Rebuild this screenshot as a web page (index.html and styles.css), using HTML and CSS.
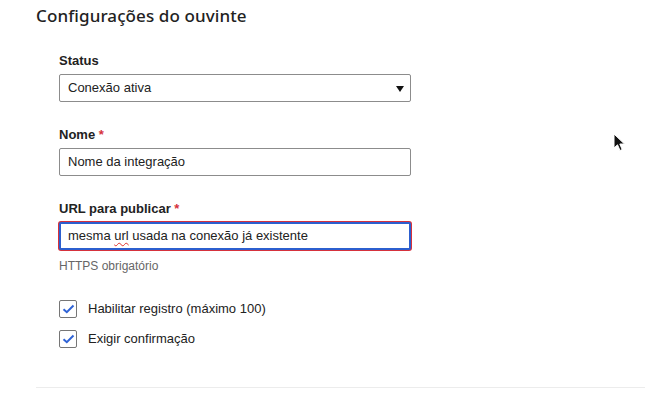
FILE: index.html
```html
<!DOCTYPE html>
<html lang="pt">
<head>
<meta charset="utf-8">
<link rel="stylesheet" href="styles.css">
</head>
<body>
<div class="page">
  <h2 class="title">Configurações do ouvinte</h2>
  <div class="form">
    <div class="field">
      <label class="label">Status</label>
      <div class="select">Conexão ativa<span class="caret"></span></div>
    </div>
    <div class="field">
      <label class="label">Nome <span class="req">*</span></label>
      <div class="input">Nome da integração</div>
    </div>
    <div class="field last">
      <label class="label">URL para publicar <span class="req">*</span></label>
      <div class="input focus">mesma <span class="spell">url</span> usada na conexão já existente</div>
      <div class="help">HTTPS obrigatório</div>
    </div>
    <div class="checks">
      <div class="check">
        <span class="box"><svg width="13" height="10" viewBox="0 0 13 10"><path d="M1.5 5.2 L4.8 8.2 L11.5 1.5" fill="none" stroke="#2f63d6" stroke-width="2"/></svg></span>
        <span>Habilitar registro (máximo 100)</span>
      </div>
      <div class="check">
        <span class="box"><svg width="13" height="10" viewBox="0 0 13 10"><path d="M1.5 5.2 L4.8 8.2 L11.5 1.5" fill="none" stroke="#2f63d6" stroke-width="2"/></svg></span>
        <span>Exigir confirmação</span>
      </div>
    </div>
  </div>
  <div class="divider"></div>
</div>
<svg class="cursor" width="13" height="20" viewBox="0 0 13 20"><path d="M1 1 L1 15 L4.5 11.8 L7 17.5 L9.2 16.5 L6.8 11 L11.5 11 Z" fill="#111" stroke="#fff" stroke-width="1"/></svg>
</body>
</html>
```
FILE: styles.css
```css
html, body { margin: 0; padding: 0; background: #fff; }
body { font-family: "Liberation Sans", Arial, sans-serif; color: #222; font-size: 13px; }
.page { padding-left: 36px; }
.title {
  margin: 0; padding-top: 5px;
  font-family: "Noto Sans", "Open Sans", sans-serif;
  font-weight: 500; font-size: 17px; line-height: 22px; color: #222;
  letter-spacing: 0.1px;
}
.form { margin-left: 23px; margin-top: 26px; width: 352px; }
.field { margin-bottom: 25px; }
.field.last { margin-bottom: 0; }
.label { display: block; font-weight: 700; font-size: 13px; line-height: 16px; margin-bottom: 5px; color: #222; }
.req { color: #d6323c; }
.select, .input {
  position: relative; box-sizing: border-box; height: 28px;
  border: 1px solid #8c8c8c; border-radius: 2px;
  padding: 0 8px; line-height: 26px; font-size: 13px; color: #222; background: #fff;
}
.caret {
  position: absolute; right: 6px; top: 11px;
  width: 0; height: 0;
  border-left: 4px solid transparent; border-right: 4px solid transparent; border-top: 6px solid #111;
}
.input.focus {
  border: 2px solid #2c5fcf; box-shadow: 0 0 0 1px #d6323c; padding: 0 7px; line-height: 24px;
}
.spell { text-decoration: underline wavy #e0302c; text-decoration-thickness: 1px; text-underline-offset: 2px; }
.help { margin-top: 9px; font-size: 12px; line-height: 14px; color: #666; }
.checks { margin-top: 27px; display: flex; flex-direction: column; gap: 13px; }
.check { display: flex; align-items: center; gap: 11px; height: 17px; line-height: 17px; }
.box {
  box-sizing: border-box; width: 18px; height: 18px; border: 1px solid #767676; border-radius: 2px;
  display: flex; align-items: center; justify-content: center; background: #fff;
}
.divider { margin-top: 40px; height: 1px; background: #ececec; }
.cursor { position: absolute; left: 613px; top: 133px; }
```
